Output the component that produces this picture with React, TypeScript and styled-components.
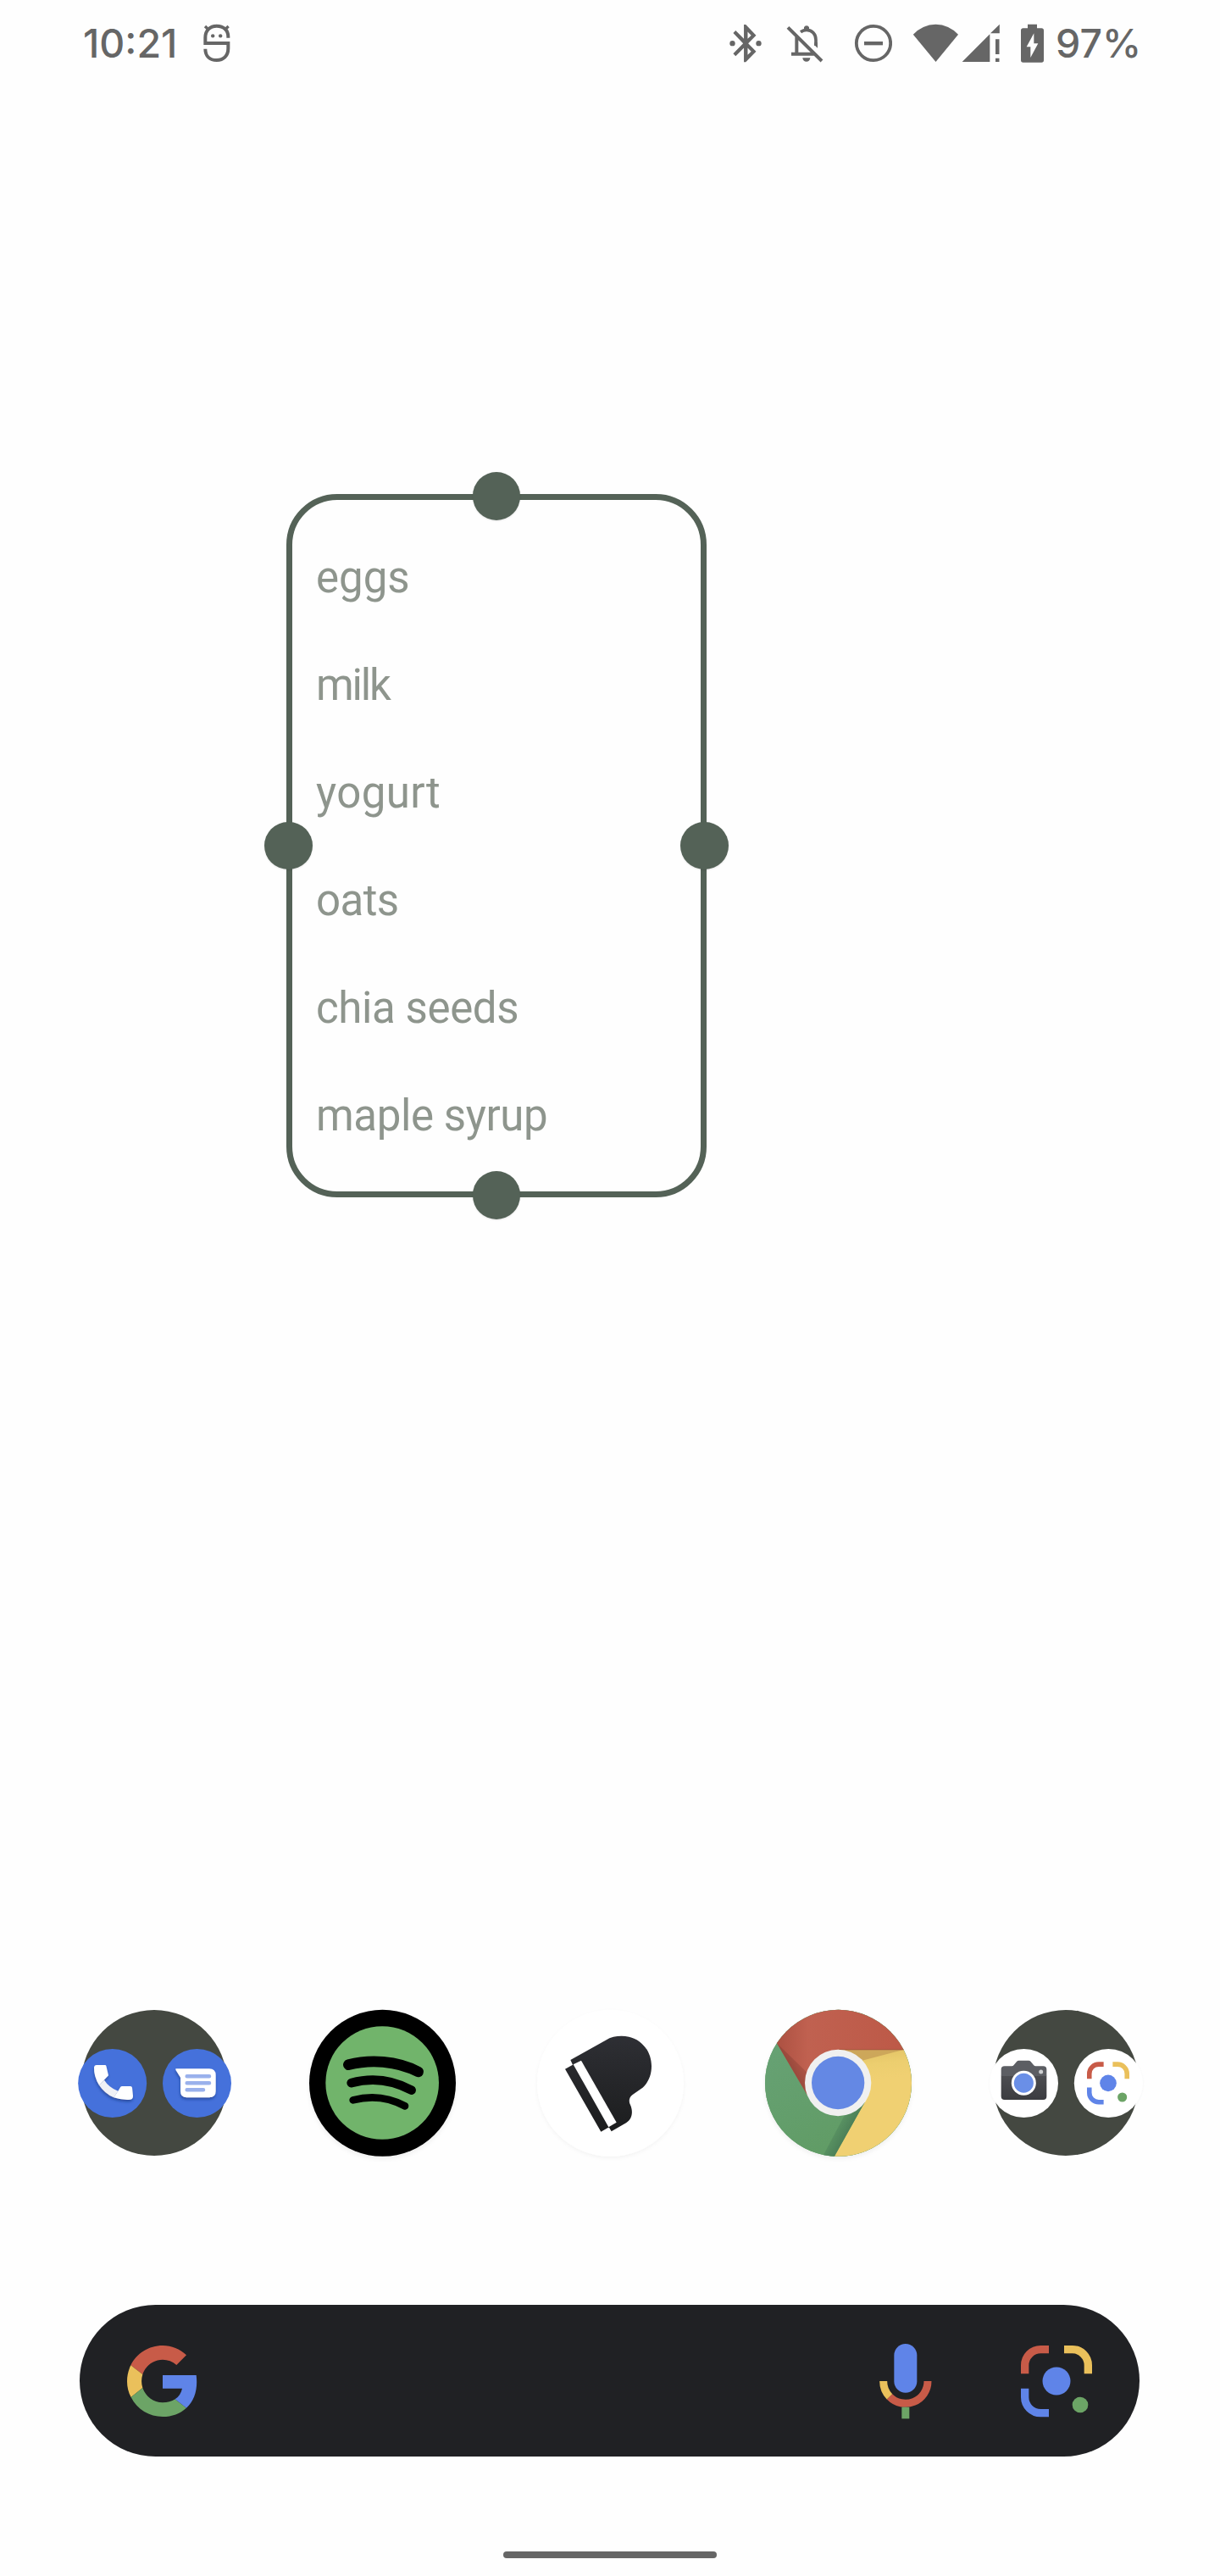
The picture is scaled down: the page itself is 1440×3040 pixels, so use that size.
import React from "react";
import styled, { createGlobalStyle } from "styled-components";

const GlobalStyle = createGlobalStyle`
  *, *::before, *::after { box-sizing: border-box; }
  html, body { margin: 0; padding: 0; background: #fefefe; }
  svg { display: block; flex: none; }
`;

const palette = {
  status: "#666666",
  frame: "#546257",
  note: "#8e958d",
  folder: "#444841",
  bar: "#202124",
  blue: "#5f84e8",
  red: "#c85b48",
  yellow: "#eac05b",
  green: "#6ca466",
};

const Screen = styled.div`
  width: 1440px;
  height: 3040px;
  display: flex;
  flex-direction: column;
  background: #fefefe;
  overflow: hidden;
  font-family: Roboto, "Liberation Sans", sans-serif;
`;

const StatusBar = styled.header`
  height: 102px;
  flex: none;
  display: flex;
  align-items: center;
  justify-content: space-between;
  padding: 0 92px 0 98px;
  color: ${palette.status};
`;

const StatusGroup = styled.div`
  display: flex;
  align-items: center;
`;

const StatusText = styled.span<{ $width: number; $spacing: number }>`
  width: ${(p) => p.$width}px;
  font-family: Inter, Roboto, sans-serif;
  font-size: 46.5px;
  font-weight: 500;
  line-height: 60px;
  letter-spacing: ${(p) => p.$spacing}px;
  white-space: nowrap;
`;

const StatusIcon = styled.svg<{ $before: number }>`
  margin-left: ${(p) => p.$before}px;
`;

const Workspace = styled.main`
  height: 2248px;
  flex: none;
  padding: 481px 0 0 338px;
`;

const ResizeFrame = styled.section`
  position: relative;
  width: 496px;
  height: 830px;
  border: 7px solid ${palette.frame};
  border-radius: 60px;
  padding: 28px 0 0 28px;
`;

const Handle = styled.span<{ $x: number; $y: number }>`
  position: absolute;
  left: ${(p) => p.$x}px;
  top: ${(p) => p.$y}px;
  width: 56.5px;
  height: 56.5px;
  border-radius: 50%;
  background: ${palette.frame};
  box-shadow: 0 1px 2px rgba(0, 0, 0, 0.1);
`;

const NoteList = styled.ul`
  list-style: none;
  margin: 0;
  padding: 0;
`;

const NoteItem = styled.li<{ $spacing: number }>`
  height: 127px;
  line-height: 127px;
  font-size: 51px;
  letter-spacing: ${(p) => p.$spacing}px;
  color: ${palette.note};
  white-space: nowrap;
`;

const Dock = styled.nav`
  height: 210px;
  flex: none;
  display: grid;
  grid-template-columns: repeat(5, 269px);
  justify-content: center;
  justify-items: center;
`;

const SearchBar = styled.div`
  width: 1251px;
  height: 179px;
  flex: none;
  margin: 160px 0 0 94px;
  padding: 0 55px;
  display: flex;
  align-items: center;
  border-radius: 90px;
  background: ${palette.bar};
`;

const Spacer = styled.div`
  flex: 1;
`;

const MicIcon = styled.svg`
  margin-right: 104px;
`;

const HomeIndicator = styled.div`
  width: 252px;
  height: 8px;
  flex: none;
  margin: 112px 0 0 594px;
  border-radius: 4px;
  background: ${palette.status};
`;

function MascotIcon() {
  return (
    <StatusIcon $before={0} width="36" height="48" viewBox="473 52 108 144" fill="none" stroke={palette.status}>
      <path strokeWidth="12" d="M567 105V101C567 77 550 63 526.500 63C502 63 486 79 486 104V124H567V142C567 169 550 184 526.500 184C502 184 486 169 486 144" />
      <path strokeWidth="10" d="M485 64L500 78M568 64L553 78" />
      <g fill={palette.status} stroke="none">
        <circle cx="512.500" cy="98" r="6.500" />
        <circle cx="539.500" cy="98" r="6.500" />
      </g>
    </StatusIcon>
  );
}

function BluetoothIcon() {
  return (
    <StatusIcon $before={0} width="40" height="48" viewBox="60 50 120 144" fill={palette.status}>
      <path
        transform="translate(41 42.700) scale(6.650)"
        d="M17.500 7.710L12 2h-1v7.590L6.600 5.200 5.300 6.500 10.590 12 5.300 17.500 6.600 18.800 11 14.410V22h1l5.500-5.710L13.300 12zM13 5.830l1.880 1.880L13 9.590zM14.880 16.290L13 18.170v-3.760z"
      />
      <circle cx="73.500" cy="122.500" r="9.500" />
      <circle cx="166.500" cy="122.500" r="9.500" />
    </StatusIcon>
  );
}

function BellOffIcon() {
  return (
    <StatusIcon $before={26.67} width="46" height="48" viewBox="260 50 138 144" fill="none" stroke={palette.status}>
      <path strokeWidth="12" d="M269 66L389 185M300 97V160M281 160.500H364" />
      <path strokeWidth="11" d="M314 82C321 77 327 75 335 75C355 75 368 90 368 110V131" />
      <path stroke="none" fill={palette.status} d="M326 76V66A9.500 9.500 0 0 1 344 66V76ZM362.500 128L374 139V120H362.500ZM321 174H348A13.500 13 0 0 1 321 174Z" />
    </StatusIcon>
  );
}

function DoNotDisturbIcon() {
  return (
    <StatusIcon $before={34.33} width="46" height="48" viewBox="501 50 138 144" fill="none" stroke={palette.status}>
      <circle cx="573" cy="122" r="60.500" strokeWidth="11.500" />
      <path strokeWidth="13" d="M540 122.500H606" />
    </StatusIcon>
  );
}

function WifiIcon() {
  return (
    <StatusIcon $before={23} width="56" height="48" viewBox="708 50 168 144" fill={palette.status}>
      <path d="M713.500 91A107 107 0 0 1 873 91L793.500 188Z" />
    </StatusIcon>
  );
}

function SignalIcon() {
  return (
    <StatusIcon $before={2} width="48" height="48" viewBox="882 50 144 144" fill={palette.status}>
      <path d="M887 188L985 90V188ZM987 87L1019.500 55V87ZM1005 108H1018.500V161H1005ZM1005 175H1018.500V188H1005Z" />
    </StatusIcon>
  );
}

function BatteryIcon() {
  return (
    <StatusIcon $before={20} width="32" height="48" viewBox="1086 50 96 144" fill={palette.status}>
      <path d="M1119 55H1152V69H1168Q1176 69 1176 77V182Q1176 190 1168 190H1103Q1095 190 1095 182V77Q1095 69 1103 69H1119Z" />
      <path fill="#fefefe" d="M1141 87L1115 135H1129V173L1156 123H1141Z" />
    </StatusIcon>
  );
}

function LensGlyph() {
  return (
    <g fill="none" strokeWidth="28">
      <path stroke={palette.red} d="M629 302V272A56 56 0 0 1 685 216H714" />
      <path stroke={palette.yellow} d="M768 216H797A56 56 0 0 1 853 272V302" />
      <path stroke={palette.blue} d="M629 354V385A56 56 0 0 0 685 441H714" />
      <circle cx="741" cy="328" r="49.500" fill={palette.blue} />
      <circle cx="825" cy="412" r="28" fill={palette.green} />
    </g>
  );
}

function CommunicationFolder() {
  return (
    <svg width="210" height="210" viewBox="-9 0 630 630" role="img" aria-label="Communication">
      <defs>
        <filter id="glyphShadow" x="-30%" y="-30%" width="160%" height="170%">
          <feDropShadow dx="-1" dy="7" stdDeviation="4" floodColor="#17306f" floodOpacity="0.55" />
        </filter>
      </defs>
      <circle cx="306" cy="324" r="258" fill={palette.folder} />
      <circle cx="158" cy="325.500" r="121.500" fill="#4571db" />
      <circle cx="457.500" cy="325.500" r="121.500" fill="#4571db" />
      <g filter="url(#glyphShadow)">
        <path fill="#f0f1f5" d="M111 332L129 314Q145 340 178 353L163 376Q130 361 111 332Z" />
        <path fill="#fff" d="M102 261H132Q135 261 136 264L144 298L111 332Q92 302 93 270Q94 261 102 261ZM178 353L187 338Q189 336 192 336H222Q227 336 228 341L231 371Q231 384 215 384Q190 385 163 376Z" />
      </g>
      <g filter="url(#glyphShadow)">
        <path fill="#fff" d="M383 274H501Q524 274 524 297V354Q524 376 501 376H421Q399 376 399 354V305L383 280Q380 274 383 274Z" />
      </g>
      <path stroke="#9ab1ec" strokeWidth="13.500" strokeLinecap="round" d="M422 301H501M422 325H501M422 348.500H480" />
    </svg>
  );
}

function SpotifyIcon() {
  return (
    <svg width="210" height="210" viewBox="-12 0 630 630" role="img" aria-label="Spotify">
      <defs>
        <filter id="discShadow" x="-15%" y="-15%" width="130%" height="135%">
          <feDropShadow dx="0" dy="9" stdDeviation="8" floodColor="#000" floodOpacity="0.06" />
        </filter>
      </defs>
      <circle cx="304.500" cy="325" r="259.500" fill="#000" filter="url(#discShadow)" />
      <circle cx="303.500" cy="324" r="200.500" fill="#71b46b" />
      <g fill="none" stroke="#000" strokeLinecap="round">
        <path strokeWidth="38" d="M184 260C260 240 355 245 431 285" />
        <path strokeWidth="32" d="M194 324.500C265 305 340 314 407 350" />
        <path strokeWidth="26" d="M200 385C265 368 325 374 384 406" />
      </g>
    </svg>
  );
}

function PianoIcon() {
  return (
    <svg width="210" height="210" viewBox="-15 0 630 630" role="img" aria-label="Piano">
      <defs>
        <linearGradient id="piano" x1="0" y1="0" x2="0" y2="1">
          <stop offset="0" stopColor="#2e2f34" />
          <stop offset="1" stopColor="#1c1d1e" />
        </linearGradient>
        <filter id="pianoDisc" x="-15%" y="-15%" width="130%" height="135%">
          <feDropShadow dx="0" dy="6" stdDeviation="7" floodColor="#000" floodOpacity="0.045" />
        </filter>
      </defs>
      <circle cx="301.500" cy="325" r="259.500" fill="#fff" filter="url(#pianoDisc)" />
      <path
        fill="url(#piano)"
        d="M160 243L285 173C310 158 340 156 367 161C414 171 447 215 447 265C447 300 433 329 409 346L380 366C368 374 365 389 372 402C382 424 380 452 357 466L305 496L297 482L294 482L268 497L141 275L168 260Z"
      />
      <path fill="#fff" d="M170 259L198 245L323 464L295 481Z" />
    </svg>
  );
}

function ChromeIcon() {
  return (
    <svg width="210" height="210" viewBox="-18 0 630 630" role="img" aria-label="Chrome">
      <defs>
        <clipPath id="chromeDisc"><circle cx="298.500" cy="325" r="259.500" /></clipPath>
        <filter id="chromeShadow" x="-15%" y="-15%" width="130%" height="135%">
          <feDropShadow dx="0" dy="8" stdDeviation="8" floodColor="#000" floodOpacity="0.06" />
        </filter>
        <linearGradient id="chromeRed" gradientUnits="userSpaceOnUse" x1="90" y1="180" x2="530" y2="180">
          <stop offset="0" stopColor="#ae5243" />
          <stop offset="0.230" stopColor="#c06150" />
          <stop offset="1" stopColor="#bd5947" />
        </linearGradient>
        <linearGradient id="chromeFold" gradientUnits="userSpaceOnUse" x1="120" y1="270" x2="190" y2="230">
          <stop offset="0" stopColor="#8e4438" stopOpacity="0.850" />
          <stop offset="1" stopColor="#ae5243" stopOpacity="0.500" />
        </linearGradient>
        <linearGradient id="chromeGreen" gradientUnits="userSpaceOnUse" x1="70" y1="220" x2="240" y2="560">
          <stop offset="0" stopColor="#66a173" />
          <stop offset="1" stopColor="#619c66" />
        </linearGradient>
        <linearGradient id="greenShade" gradientUnits="userSpaceOnUse" x1="260" y1="480" x2="350" y2="530">
          <stop offset="0" stopColor="#4b805a" stopOpacity="0" />
          <stop offset="0.800" stopColor="#497c56" />
        </linearGradient>
        <linearGradient id="chromeYellow" gradientUnits="userSpaceOnUse" x1="440" y1="200" x2="455" y2="310">
          <stop offset="0" stopColor="#e2c265" />
          <stop offset="0.500" stopColor="#ecce6f" />
          <stop offset="1" stopColor="#f0d072" />
        </linearGradient>
      </defs>
      <circle cx="298.500" cy="325" r="259.500" fill="#619c66" filter="url(#chromeShadow)" />
      <g clipPath="url(#chromeDisc)">
        <rect x="30" y="60" width="540" height="540" fill="url(#chromeGreen)" />
        <path fill="url(#chromeRed)" d="M81 184L0 60H600V207H298L190 370Z" />
        <path fill="url(#chromeFold)" d="M81 184L210 309L190 370Z" />
        <path fill="url(#chromeYellow)" d="M298 206H600V620H265L284 585L392 393Z" />
        <path fill="#cda75a" d="M300 207H528L380 246Z" />
        <path fill="url(#greenShade)" d="M322 436L392 393L284 586L240 590Z" />
        <path fill="#a34d3c" d="M300 205H530V207.500H300Z" />
      </g>
      <circle cx="297.500" cy="324" r="117.500" fill="#f0f0f0" />
      <circle cx="297.500" cy="324" r="93.500" fill="#6488e4" />
    </svg>
  );
}

function CameraFolder() {
  return (
    <svg width="210" height="210" viewBox="-21 0 630 630" role="img" aria-label="Camera">
      <defs>
        <linearGradient id="cameraBody" x1="0" y1="0" x2="0" y2="1">
          <stop offset="0" stopColor="#4c4d51" />
          <stop offset="1" stopColor="#3b3c40" />
        </linearGradient>
        <filter id="miniShadow" x="-15%" y="-15%" width="130%" height="135%">
          <feDropShadow dx="0" dy="2" stdDeviation="3" floodColor="#000" floodOpacity="0.050" />
        </filter>
      </defs>
      <circle cx="294" cy="324" r="258" fill={palette.folder} />
      <g fill="#fff" filter="url(#miniShadow)">
        <circle cx="145.500" cy="325.500" r="121.500" />
        <circle cx="445" cy="325.500" r="121.500" />
      </g>
      <path fill="url(#cameraBody)" d="M65 299H226V372Q226 384 214 384H77Q65 384 65 372Z" />
      <path fill="#5c5e63" d="M65 300V277Q65 265 77 265H103Q107 265 110 261L120 249Q123 245 128 245H162Q167 245 170 249L180 261Q183 265 187 265H214Q226 265 226 277V300Z" />
      <circle cx="145" cy="325" r="43.500" fill="#fff" filter="url(#miniShadow)" />
      <circle cx="145" cy="324.500" r="34.500" fill="#6a8fe7" />
      <circle cx="206" cy="285" r="7.500" fill="#ced0d2" />
      <g transform="translate(3.100 129.800) scale(0.595)"><LensGlyph /></g>
    </svg>
  );
}

function GoogleIcon() {
  return (
    <svg width="84" height="86" viewBox="207 198 252 258" role="img" aria-label="Google">
      <path fill={palette.red} d="M223 271C243 229 287 201 336 201C368 201 397 213 420 235L385 270C371 257 354 251 336 251C305 251 276 271 265 303Z" />
      <path fill={palette.yellow} d="M223 271L265 303C260 318 260 336 265 351L224 384C206 350 205 309 223 271Z" />
      <path fill={palette.green} d="M224 384L265 351C276 382 303 403 336 403C353 403 368 399 380 391L420 422C398 442 369 453 336 453C289 453 246 428 224 384Z" />
      <path fill={palette.blue} d="M336 306H455C461 353 450 396 420 422L380 391C393 382 402 369 405 353H336Z" />
    </svg>
  );
}

function VoiceIcon() {
  return (
    <MicIcon width="62" height="92" viewBox="113 190 186 276" role="img" aria-label="Voice search">
      <rect x="165" y="196" width="81" height="173" rx="40.500" fill={palette.blue} />
      <g fill="none" strokeWidth="27">
        <path stroke={palette.red} d="M284 328A78.500 78.500 0 0 1 149 383" />
        <path stroke={palette.yellow} d="M127 328A78.500 78.500 0 0 0 149 383" />
        <path stroke={palette.green} d="M205.500 420V461" />
      </g>
    </MicIcon>
  );
}

const notes = [
  { text: "eggs", spacing: 0 },
  { text: "milk", spacing: -2.2 },
  { text: "yogurt", spacing: 0.4 },
  { text: "oats", spacing: -0.6 },
  { text: "chia seeds", spacing: -0.4 },
  { text: "maple syrup", spacing: -0.4 },
];

const handles = [
  { x: 212.5, y: -33 },
  { x: -33, y: 379.5 },
  { x: 458.3, y: 379.5 },
  { x: 212.5, y: 792 },
];

export default function App() {
  return (
    <>
      <GlobalStyle />
      <Screen>
        <StatusBar>
          <StatusGroup>
            <StatusText $width={139.5} $spacing={0}>10:21</StatusText>
            <MascotIcon />
          </StatusGroup>
          <StatusGroup>
            <BluetoothIcon />
            <BellOffIcon />
            <DoNotDisturbIcon />
            <WifiIcon />
            <SignalIcon />
            <BatteryIcon />
            <StatusText $width={114} $spacing={0}>&#8202;&#8202;&#8202;97%</StatusText>
          </StatusGroup>
        </StatusBar>
        <Workspace>
          <ResizeFrame>
            <NoteList>
              {notes.map((note) => (
                <NoteItem key={note.text} $spacing={note.spacing}>{note.text}</NoteItem>
              ))}
            </NoteList>
            {handles.map((h) => (
              <Handle key={`${h.x}:${h.y}`} $x={h.x} $y={h.y} />
            ))}
          </ResizeFrame>
        </Workspace>
        <Dock>
          <CommunicationFolder />
          <SpotifyIcon />
          <PianoIcon />
          <ChromeIcon />
          <CameraFolder />
        </Dock>
        <SearchBar>
          <GoogleIcon />
          <Spacer />
          <VoiceIcon />
          <svg width="86" height="86" viewBox="612 199 258 258" role="img" aria-label="Lens">
            <LensGlyph />
          </svg>
        </SearchBar>
        <HomeIndicator />
      </Screen>
    </>
  );
}
